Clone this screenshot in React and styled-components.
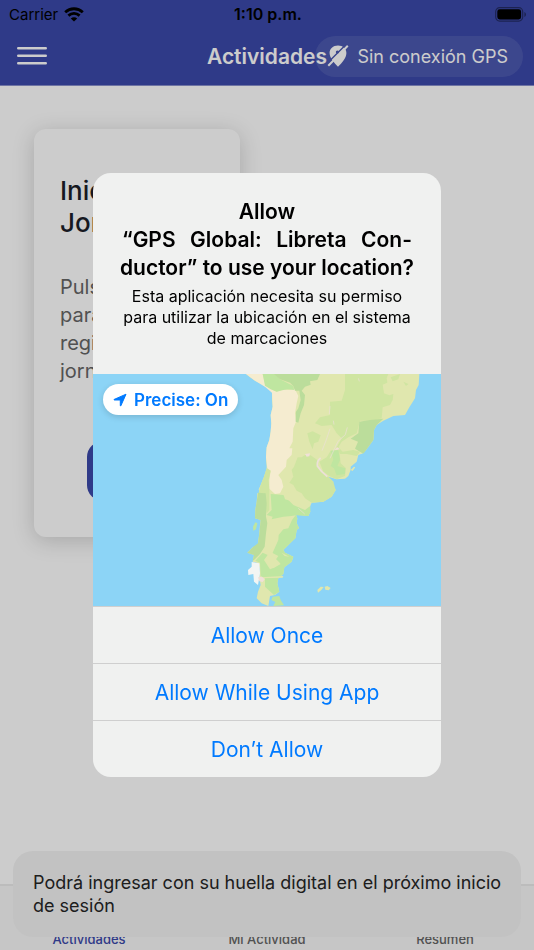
import React, { useState } from 'react';
import styled, { createGlobalStyle } from 'styled-components';

const tabs = ['Actividades', 'Mi Actividad', 'Resumen'];
const choices = ['Allow Once', 'Allow While Using App', 'Don’t Allow'];

const WifiIcon = () => (
    <svg width="20" height="15" viewBox="0 0 20 15" fill="none" stroke="#000" strokeWidth="2.8">
        <path d="M1.2 5.2C6.2 .6 13.8 .6 18.8 5.2" />
        <path d="M4.4 8.6c3.2-2.9 8-2.9 11.2 0" />
        <path d="M10 14.6L6.8 11.4c1.8-1.6 4.6-1.6 6.4 0z" fill="#000" stroke="none" />
    </svg>
)

const BatteryIcon = () => (
    <svg width="32" height="15" viewBox="0 0 32 15">
        <rect x=".7" y=".7" width="27" height="13.4" rx="4" fill="none" stroke="#000" strokeOpacity=".4" strokeWidth="1.2" />
        <rect x="2.3" y="2.3" width="23.8" height="10.2" rx="2.4" />
        <path d="M29.4 5v5c1-.4 1.6-1.4 1.6-2.5S30.4 5.4 29.4 5z" fillOpacity=".4" />
    </svg>
)

const MenuIcon = () => (
    <svg width="30" height="20" viewBox="0 0 30 20" stroke="#fff" strokeWidth="2.4" strokeLinecap="round">
        <path d="M1.2 2.2h27.6M1.2 9.8h27.6M1.2 17.3h27.6" />
    </svg>
)

const GpsOffIcon = () => (
    <svg width="22" height="24" viewBox="0 0 22 24">
        <path d="M11 1.5c5 0 8.4 3.2 8.4 7.5 0 5-4.4 9.8-8.4 13.8C7.4 18.8 2.6 14 2.6 9c0-4.3 3.4-7.5 8.4-7.5z" fill="#fff" />
        <circle cx="10.4" cy="8" r="1.6" fill="#4b58b1" />
        <path d="M-.5 20L20 -.5" stroke="#4b58b1" strokeWidth="1.4" />
        <path d="M1.3 21.8L20.8 1.8" stroke="#fff" strokeWidth="2" />
    </svg>
)

const ArrowIcon = () => (
    <svg width="14" height="14" viewBox="0 0 14 14" fill="#007aff" stroke="#007aff" strokeWidth="1" strokeLinejoin="round">
        <path d="M13 1.2L7.8 12.9 7.3 12.8V7H1.1L1 6.5z" />
    </svg>
)

// simplified terrain of the southern cone
const MapDrawing = () => (
    <svg viewBox="-411 12 1044 696" role="img" aria-label="Map">
        <path fill="#e0e7ae" d="M48 12L60 22L75 32L90 40L105 50L120 60L126 68L126 90L128 110L122 135L124 160L122 185L118 210L110 232L108 262L110 295L102 320L92 345L86 358L90 368L82 370L80 395L76 420L75 445L92 450L90 465L88 490L84 520L80 535L70 530L52 548L72 555L68 575L85 580L90 600L88 620L92 645L84 665L80 685L95 700L115 708L118 690L120 678L135 675L148 665L142 640L145 625L160 612L163 592L185 575L190 560L165 548L160 540L185 515L196 505L200 480L207 474L200 460L202 445L198 434L215 436L235 438L241 425L238 415L245 398L280 395L305 380L317 360L308 345L310 335L295 320L320 328L345 326L355 318L362 300L362 290L380 275L385 255L400 250L412 235L430 210L432 180L440 165L460 152L490 138L525 135L538 112L555 85L558 60L566 45L568 12Z" />
        <path fill="#f5ecd0" d="M48 12L98 12L105 40L125 58L140 65L160 58L175 60L195 58L205 78L200 100L195 130L198 155L190 175L188 215L178 235L187 235L185 255L170 270L168 290L145 315L155 330L160 350L150 370L135 372L118 356L118 330L122 302L112 295L108 262L110 232L118 210L122 185L124 160L122 135L128 110L126 68L105 50L75 32Z" />
        <path fill="#bfe6a0" d="M98 12L135 12L150 28L190 48L192 60L175 58L160 60L140 65L122 58L105 47Z" />
        <path fill="#bbdd9b" d="M132 12L270 12L262 30L240 34L242 44L225 50L215 62L225 75L222 105L212 130L205 158L197 155L198 125L205 115L212 90L208 62L195 62L190 48L180 38L150 28Z" />
        <path fill="#cfe5a1" d="M345 12L475 12L470 24L472 38L458 44L462 70L478 76L490 72L488 90L480 105L458 112L455 145L430 152L390 152L380 190L355 202L335 215L325 232L338 245L370 240L390 245L380 258L350 252L330 252L320 232L335 205L320 190L305 165L275 168L255 160L270 142L300 135L300 95L335 92L345 60Z" />
        <path fill="#cfe5a1" d="M482 22L510 12L505 28L488 34ZM520 35L535 42L528 48ZM232 190L248 184L272 196L265 215L252 220L248 238L238 215Z" />
        <path fill="#bbdd9b" d="M388 155L420 150L460 146L440 165L432 180L430 210L412 235L400 251L375 236L384 215L362 206L385 190Z" />
        <path fill="#cfe5a1" d="M203 262L215 262L225 255L242 256L262 270L262 290L275 305L292 318L310 335L317 360L305 380L280 395L245 398L225 385L215 370L200 362L190 345L178 338L190 320L185 300L192 290Z" />
        <path fill="#cfe5a1" d="M268 275L290 262L302 242L328 242L332 280L348 295L345 318L320 328L298 318L280 305Z" />
        <path fill="#bfe6a0" d="M302 242L325 240L330 270L322 288L345 295L345 312L320 316L312 295L302 288L310 268Z" />
        <path fill="#cfe5a1" d="M110 295L122 302L116 330L118 360L118 420L110 430L102 372L86 368L92 345L102 320Z" />
        <path fill="#bbdd9b" d="M84 368L107 370L110 400L108 440L112 460L108 490L104 530L90 552L72 570L68 572L72 555L52 548L70 530L84 520L88 490L92 450L75 445L76 420L80 395Z" />
        <path fill="#bfe6a0" d="M122 372L160 375L190 405L225 420L241 408L241 425L235 438L198 436L185 438L160 440L125 448L128 440L110 435L125 420Z" />
        <path fill="#bfe6a0" d="M198 434L202 445L200 460L207 474L200 480L196 505L185 515L160 540L165 548L190 560L185 575L163 592L160 612L145 625L142 640L148 665L132 675L105 650L105 625L92 618L90 578L76 572L98 548L120 558L118 575L130 595L150 580L135 565L128 548L145 510L146 495L160 478L175 475L186 450Z" />
        <path fill="#e0e7ae" d="M120 545L145 558L138 568L152 582L135 592L120 598L102 570ZM155 548L178 560L164 558ZM92 622L160 618L158 623L95 625Z" />
        <path fill="#e0e7ae" d="M160 372L195 362L212 380L222 398L228 410L210 402L190 395L165 388Z" />
        <path fill="#bfe6a0" d="M124 690L128 680L148 678L152 690L162 706L130 708L136 696Z" />
        <path fill="#bfe6a0" d="M76 457L82 460L78 478L70 482L69 470Z" />
        <path fill="#f2f5f3" d="M65 576L88 580L90 610L84 645L72 635L70 612L55 615L54 600L65 590Z" />
        <path fill="#f0e0d8" d="M84 622L96 620L104 628L98 636L88 634ZM225 252L240 250L238 259L230 260ZM314 240L322 232L330 238Z" />
        <path fill="none" stroke="#ece0d8" strokeWidth="5" d="M272 264Q260 272 262 288Q272 304 292 320" />
        <path fill="none" stroke="#ece0d8" strokeWidth="2" d="M300 176L288 212L276 242M352 172L346 194L324 214L300 265M300 108L298 132M385 25L388 34M310 152L312 164M205 415L224 432" />
        <path fill="#8cd4f6" d="M392 254L402 250L398 268L380 285L374 300L362 304L364 292L382 280Z" />
        <path fill="#e0e7ae" d="M362 300L372 290L376 292L368 303ZM262 660L272 650L281 651L274 660L264 668ZM284 650L292 648L302 654L296 661L286 659Z" />
    </svg>
)

const App = () => {
    const [tab, setTab] = useState(tabs[0]);
    const [open, setOpen] = useState(true);

    return (
        <Page>
            <GlobalStyle />
            <Header>
                <StatusBar>
                    <Carrier>Carrier <WifiIcon /></Carrier>
                    <Clock>1:10 p.m.</Clock>
                    <Battery><BatteryIcon /></Battery>
                </StatusBar>
                <Toolbar>
                    <MenuButton aria-label="Menu"><MenuIcon /></MenuButton>
                    <Title>Actividades</Title>
                    <GpsChip><GpsOffIcon /> Sin conexión GPS</GpsChip>
                </Toolbar>
            </Header>

            <Content>
                <Card>
                    <h2>Iniciar Jornada</h2>
                    <p>Pulse Iniciar para poder registrar su jornada</p>
                    <StartButton>Iniciar</StartButton>
                </Card>
            </Content>

            <TabBar>
                {tabs.map(name => (
                    <Tab key={name} $active={name === tab} onClick={() => setTab(name)}>{name}</Tab>
                ))}
            </TabBar>
            <Toast role="status">Podrá ingresar con su huella digital en el próximo inicio de sesión</Toast>

            {open && (
                <Backdrop>
                    <Dialog role="dialog" aria-modal="true" aria-labelledby="dialog-title">
                        <Message>
                            <h1 id="dialog-title">
                                Allow
                                <Spread>“GPS Global: Libreta Con-</Spread>
                                ductor” to use your location?
                            </h1>
                            <p>Esta aplicación necesita su permiso para utilizar la ubicación en el sistema de marcaciones</p>
                        </Message>
                        <MapBox>
                            <MapDrawing />
                            <Precise><ArrowIcon /> Precise: On</Precise>
                        </MapBox>
                        {choices.map(text => (
                            <Choice key={text} onClick={() => setOpen(false)}>{text}</Choice>
                        ))}
                    </Dialog>
                </Backdrop>
            )}
        </Page>
    )
};

export default App;

const GlobalStyle = createGlobalStyle`
    * {
        box-sizing: border-box;
    }
    body{
        margin: 0;
        background: #fff;
        font-family: Inter, "Liberation Sans", sans-serif;
    }
    h1, h2, p{
        margin: 0;
    }
    button{
        border: 0;
        padding: 0;
        background: none;
        font-family: inherit;
        cursor: pointer;
    }
    svg{
        display: block;
        flex: none;
    }
`;

const Page = styled.div`
    min-height: 100vh;
    display: flex;
    flex-direction: column;
`;

const Header = styled.header`
    background: #3b49aa;
    border-bottom: 1px solid #8a92cc;
`;

const StatusBar = styled.div`
    display: grid;
    grid-template-columns: 1fr auto 1fr;
    align-items: center;
    height: 28px;
    padding: 0 7px 0 9px;
    font-size: 15px;
    color: #000;
`;

const Carrier = styled.span`
    display: flex;
    align-items: center;
    gap: 6px;
`;

const Clock = styled.span`
    font-size: 16px;
    font-weight: 600;
`;

const Battery = styled.span`
    justify-self: end;
`;

const Toolbar = styled.div`
    display: grid;
    grid-template-columns: 1fr auto 1fr;
    align-items: center;
    height: 57px;
    padding: 0 11px 1px;
    color: #fff;
`;

const MenuButton = styled.button`
    justify-self: start;
    margin-left: 6px;
`;

const Title = styled.h1`
    font-size: 21px;
    font-weight: 600;
`;

const GpsChip = styled.div`
    justify-self: end;
    display: flex;
    align-items: center;
    gap: 8px;
    height: 41px;
    margin-left: -20px;
    padding: 0 15px 0 12px;
    border-radius: 21px;
    background: rgba(255, 255, 255, .09);
    font-size: 18px;
    white-space: nowrap;
`;

const Content = styled.main`
    flex: 1;
    padding: 43px 34px;
`;

const Card = styled.section`
    width: 206px;
    height: 408px;
    padding: 46px 26px;
    border-radius: 12px;
    box-shadow: 0 4px 22px rgba(0, 0, 0, .18);
    h2{
        font-size: 26px;
        font-weight: 500;
        line-height: 32px;
        color: #1c1f2a;
    }
    p{
        margin-top: 34px;
        font-size: 20px;
        line-height: 28px;
        color: #666;
    }
`;

const StartButton = styled.button`
    display: block;
    width: 100px;
    height: 60px;
    margin: 56px auto 0;
    border-radius: 16px;
    background: #3b49aa;
    color: #fff;
    font-size: 18px;
`;

const TabBar = styled.nav`
    display: grid;
    grid-template-columns: repeat(3, 1fr);
    height: 66px;
    border-top: 2px solid #ebebeb;
    background: #f8f8f8;
`;

const Tab = styled.button`
    align-self: end;
    height: 20px;
    padding-bottom: 2px;
    font-size: 13px;
    font-weight: 500;
    color: ${props => props.$active ? '#3b49aa' : '#666'};
`;

const Toast = styled.div`
    position: fixed;
    left: 13px;
    right: 13px;
    bottom: 13px;
    padding: 20px 16px 20px 20px;
    border-radius: 20px;
    background: #f3f3f3;
    font-size: 18px;
    line-height: 23px;
    color: #262626;
`;

const Backdrop = styled.div`
    position: fixed;
    inset: 0;
    display: grid;
    place-items: center;
    background: rgba(0, 0, 0, .2);
`;

const Dialog = styled.div`
    width: 65%;
    min-width: 348px;
    max-width: 380px;
    border-radius: 18px;
    overflow: hidden;
    background: #f0f1f0;
    color: #000;
`;

const Message = styled.div`
    padding: 25px 24px;
    text-align: center;
    h1{
        font-size: 21px;
        font-weight: 600;
        line-height: 28px;
    }
    p{
        margin-top: 4px;
        font-size: 16px;
        line-height: 21px;
    }
`;

const Spread = styled.span`
    display: block;
    padding: 0 5px;
    text-align: justify;
    text-align-last: justify;
`;

const MapBox = styled.div`
    position: relative;
    background: #8cd4f6;
`;

const Precise = styled.button`
    position: absolute;
    top: 10px;
    left: 10px;
    display: flex;
    align-items: center;
    gap: 7px;
    height: 31px;
    padding: 0 10px;
    border-radius: 16px;
    background: #fff;
    box-shadow: 0 2px 6px rgba(0, 0, 0, .15);
    font-size: 17px;
    font-weight: 600;
    color: #007aff;
`;

const Choice = styled.button`
    display: block;
    width: 100%;
    height: 57px;
    border-top: 1px solid #cfcfcf;
    font-size: 21px;
    color: #007aff;
`;
